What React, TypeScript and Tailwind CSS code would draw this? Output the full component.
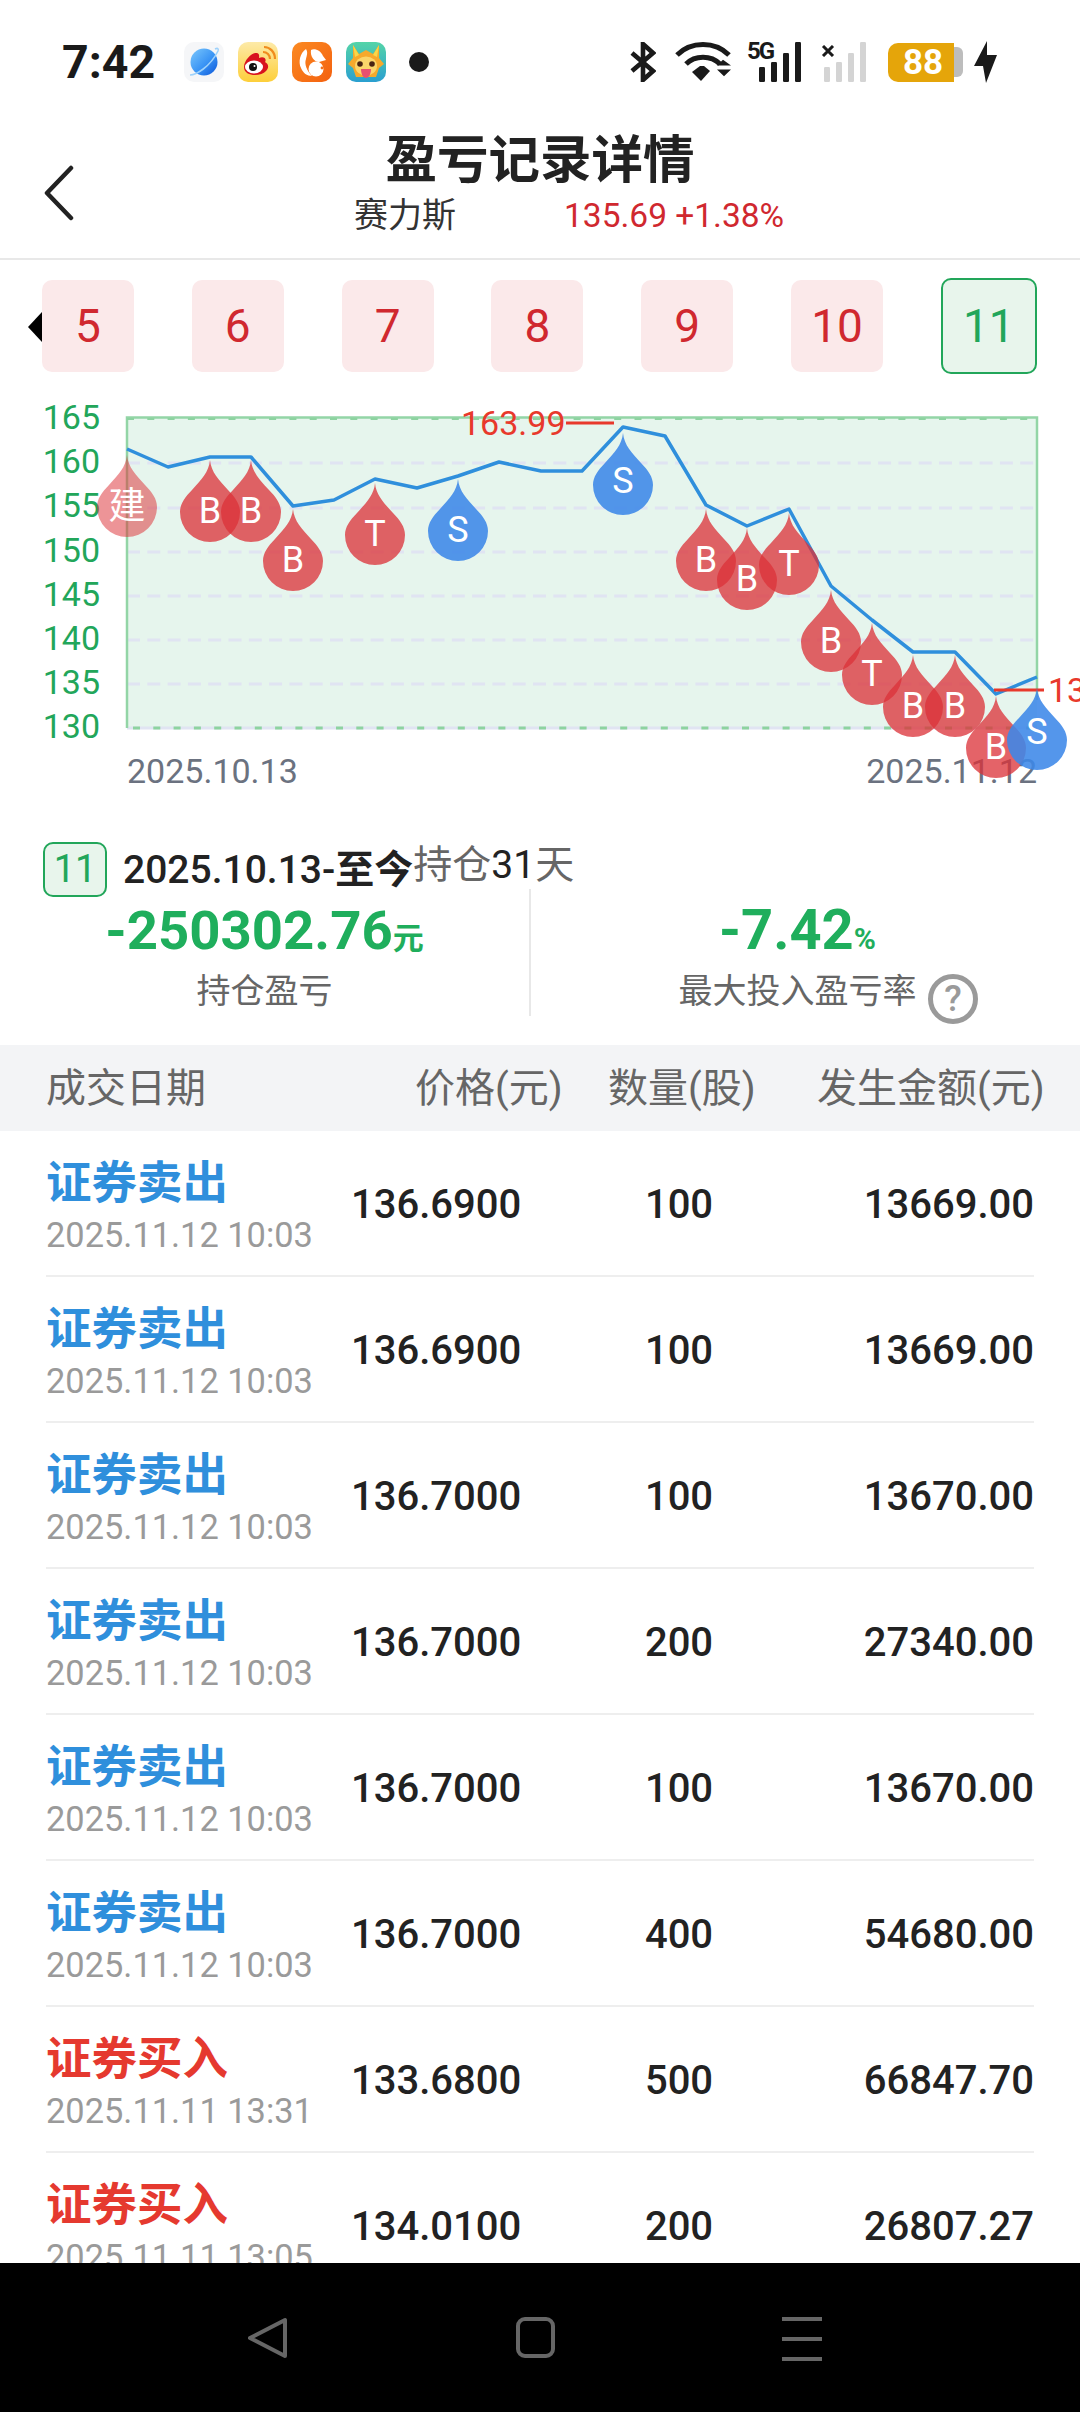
const linePoints = [
  [127, 449], [168, 467], [210, 457], [251, 457], [293, 506], [334, 500], [375, 479], [417, 488],
  [458, 476], [499, 462], [541, 471], [582, 471], [623, 427], [665, 436], [706, 505], [747, 526],
  [789, 509], [831, 586], [872, 620], [913, 652], [955, 652], [996, 694], [1037, 677],
];

const drops = [
  { x: 127, y: 455, label: "建", kind: "build", dy: 1 },
  { x: 210, y: 460, label: "B", kind: "buy", dy: 0 },
  { x: 251, y: 460, label: "B", kind: "buy", dy: 0 },
  { x: 293, y: 509, label: "B", kind: "buy", dy: 0 },
  { x: 375, y: 483, label: "T", kind: "buy", dy: 0 },
  { x: 458, y: 479, label: "S", kind: "sell", dy: 0 },
  { x: 623, y: 433, label: "S", kind: "sell", dy: -3 },
  { x: 706, y: 509, label: "B", kind: "buy", dy: 0 },
  { x: 747, y: 528, label: "B", kind: "buy", dy: 0 },
  { x: 789, y: 513, label: "T", kind: "buy", dy: 0 },
  { x: 831, y: 590, label: "B", kind: "buy", dy: 0 },
  { x: 872, y: 623, label: "T", kind: "buy", dy: 0 },
  { x: 913, y: 655, label: "B", kind: "buy", dy: 0 },
  { x: 955, y: 655, label: "B", kind: "buy", dy: 0 },
  { x: 996, y: 696, label: "B", kind: "buy", dy: 0 },
  { x: 1037, y: 688, label: "S", kind: "sell", dy: -7 },
];

const trades = [
  { type: "证券卖出", time: "2025.11.12 10:03", price: "136.6900", qty: "100", amount: "13669.00" },
  { type: "证券卖出", time: "2025.11.12 10:03", price: "136.6900", qty: "100", amount: "13669.00" },
  { type: "证券卖出", time: "2025.11.12 10:03", price: "136.7000", qty: "100", amount: "13670.00" },
  { type: "证券卖出", time: "2025.11.12 10:03", price: "136.7000", qty: "200", amount: "27340.00" },
  { type: "证券卖出", time: "2025.11.12 10:03", price: "136.7000", qty: "100", amount: "13670.00" },
  { type: "证券卖出", time: "2025.11.12 10:03", price: "136.7000", qty: "400", amount: "54680.00" },
  { type: "证券买入", time: "2025.11.11 13:31", price: "133.6800", qty: "500", amount: "66847.70" },
  { type: "证券买入", time: "2025.11.11 13:05", price: "134.0100", qty: "200", amount: "26807.27" },
];

const DROP_PATH =
  "M0 0C1 12 9 20 18 30C25 37 30 44 30 52A30 30 0 1 1 -30 52C-30 44 -25 37 -18 30C-9 20 -1 12 0 0Z";

function AppIcons() {
  return (
    <div className="ml-[29px] flex items-center gap-[14px]">
      <svg width="40" height="40" viewBox="0 0 40 40">
        <defs>
          <linearGradient id="planet" x1="0" y1="0" x2="1" y2="1">
            <stop offset="0" stopColor="#7cc8fc" />
            <stop offset="0.55" stopColor="#3a94f5" />
            <stop offset="1" stopColor="#0b55d8" />
          </linearGradient>
        </defs>
        <rect width="40" height="40" rx="10" fill="#f5f6f8" />
        <circle cx="20" cy="20" r="13.5" fill="url(#planet)" />
        <path d="M6 33C12 33 26 25 34 9C35 6 33 6 31 7" fill="none" stroke="#9ed2fb" strokeWidth="1.6" />
      </svg>
      <svg width="40" height="40" viewBox="0 0 40 40">
        <defs>
          <linearGradient id="weibo" x1="0" y1="0" x2="0" y2="1">
            <stop offset="0" stopColor="#fdeaa8" />
            <stop offset="1" stopColor="#fdcf3a" />
          </linearGradient>
        </defs>
        <rect width="40" height="40" rx="10" fill="url(#weibo)" />
        <path d="M6 25C6 18 14 10 19 11C22 12 21 15 21 16C26 14 29 17 27 20C31 22 31 26 28 29C23 35 6 35 6 25Z" fill="#d8131e" />
        <ellipse cx="16" cy="25" rx="9" ry="6.5" fill="#fff" />
        <circle cx="15" cy="25" r="4" fill="#111" />
        <circle cx="16.5" cy="24" r="1" fill="#fff" />
        <path d="M25 10C29 10 32 13 32 17M26 5C32 5 37 10 37 17" fill="none" stroke="#f08c1e" strokeWidth="2.2" />
      </svg>
      <svg width="40" height="40" viewBox="0 0 40 40">
        <defs>
          <linearGradient id="uc" x1="0" y1="0" x2="1" y2="1">
            <stop offset="0" stopColor="#fb8a22" />
            <stop offset="1" stopColor="#f4610f" />
          </linearGradient>
        </defs>
        <rect width="40" height="40" rx="10" fill="url(#uc)" />
        <path d="M14 7C8 11 6 20 9 26C11 31 15 34 20 34C15 29 12 22 14 17C15 13 16 10 14 7Z" fill="#fff" />
        <path d="M19 8C23 6 29 9 31 14L34 18L27 20C22 20 18 14 19 8Z" fill="#fff" />
        <circle cx="24" cy="27" r="7.5" fill="#fff" />
        <circle cx="30" cy="26" r="1.4" fill="#f4701a" />
      </svg>
      <svg width="40" height="40" viewBox="0 0 40 40">
        <defs>
          <linearGradient id="dragon" x1="0" y1="0" x2="0" y2="1">
            <stop offset="0" stopColor="#54d4a8" />
            <stop offset="1" stopColor="#2a9fd0" />
          </linearGradient>
        </defs>
        <rect width="40" height="40" rx="10" fill="url(#dragon)" />
        <path d="M7 3L13 12L20 8L27 12L33 3L33 16L38 22L33 26L30 35H10L7 26L2 22L7 16Z" fill="#f6a92c" />
        <path d="M7 3L13 13L9 15ZM33 3L27 13L31 15Z" fill="#f7d84a" />
        <ellipse cx="20" cy="24" rx="11" ry="9.5" fill="#fbd56a" />
        <circle cx="14" cy="22" r="2.8" fill="#4a2412" />
        <circle cx="26" cy="22" r="2.8" fill="#4a2412" />
        <path d="M15 27H25C25 33 22 36 20 36C17 36 15 32 15 27Z" fill="#e9506f" />
      </svg>
      <div className="ml-[9px] h-[20px] w-[20px] rounded-full bg-[#1a1a1a]" />
    </div>
  );
}

function SignalBars({ color }: { color: string }) {
  const bars = [
    [0, 25, 15],
    [12, 20, 20],
    [24, 11, 29],
    [36, 0, 40],
  ];
  return (
    <>
      {bars.map(([x, y, h]) => (
        <rect key={x} x={x} y={y} width="6" height={h} rx="1.2" fill={color} />
      ))}
    </>
  );
}

function StatusIcons() {
  return (
    <div className="mr-[82px] ml-auto flex h-[40px] items-center">
      <svg width="26" height="40" viewBox="0 0 26 40" fill="none" stroke="#1a1a1a" strokeWidth="4.6">
        <path d="M2 11L23 29L13 38V2L23 11L2 29" strokeLinejoin="miter" />
      </svg>
      <svg width="58" height="40" viewBox="0 0 58 40" fill="none" className="ml-[19px]">
        <path d="M2 13C16 -1 40 -1 54 13" stroke="#1a1a1a" strokeWidth="5" />
        <path d="M11 22C20 13 36 13 45 22" stroke="#1a1a1a" strokeWidth="5" />
        <path d="M17 31L25 25H29L35 30L26 40Z" fill="#1a1a1a" transform="translate(0 -1)" />
        <path d="M43 25L49 18L57 25ZM43 30H57L50 38Z" fill="#1a1a1a" transform="translate(-1 3) scale(1 .82)" />
      </svg>
      <div className="relative ml-[26px] h-[40px] w-[42px]">
        <span className="absolute -top-[3px] -left-[12px] text-[24px] leading-[24px] font-bold tracking-[-2px] text-[#1a1a1a]">
          5G
        </span>
        <svg width="42" height="40" viewBox="0 0 42 40" className="block">
          <SignalBars color="#1a1a1a" />
        </svg>
      </div>
      <div className="relative ml-[23px] h-[40px] w-[42px]">
        <svg width="42" height="40" viewBox="0 0 42 40" className="block">
          <SignalBars color="#d4d4d4" />
        </svg>
        <svg width="14" height="12" viewBox="0 0 14 12" className="absolute top-[3px] -left-[3px]">
          <path d="M2 1L12 11M12 1L2 11" stroke="#1a1a1a" strokeWidth="3" />
        </svg>
      </div>
      <div className="ml-[22px] flex items-center">
        <div className="flex h-[39px] w-[66px] items-center justify-center rounded-l-[10px] bg-[#e5a50a] pl-[4px] text-[35px] leading-none font-bold text-white">
          88
        </div>
        <div className="h-[30px] w-[9px] rounded-r-[6px] bg-[#bdbdbd]" />
      </div>
      <svg width="24" height="42" viewBox="0 0 24 42" className="ml-[11px]">
        <path d="M13 0L0 25H9L12 42L23 14H13Z" fill="#1a1a1a" />
      </svg>
    </div>
  );
}

function TradeChart() {
  const gridYs = [463, 508, 552, 596, 640, 684];
  return (
    <svg width="1080" height="434" viewBox="0 392 1080 434" className="block">
      <g fontFamily="Roboto, sans-serif" fontSize="34" fill="#22a65a" textAnchor="end">
        {[165, 160, 155, 150, 145, 140, 135, 130].map((v, i) => (
          <text key={v} x="100" y={429 + i * 44.2}>
            {v}
          </text>
        ))}
      </g>
      <rect x="127" y="418" width="910" height="310" fill="#e6f5ed" />
      {gridYs.map((y) => (
        <line key={y} x1="127" x2="1037" y1={y} y2={y} stroke="#e0e4f2" strokeWidth="3" strokeDasharray="13 7.3" />
      ))}
      <line x1="127" x2="1037" y1="728" y2="728" stroke="#e0e4f2" strokeWidth="3" />
      <line x1="127" x2="1037" y1="728" y2="728" stroke="#8dd3a0" strokeWidth="3" strokeDasharray="7 13.3" strokeDashoffset="-6" />
      <path d="M127 728V417.5H1037V700" fill="none" stroke="#93d5a6" strokeWidth="2.5" />
      <line x1="127" x2="1037" y1="419" y2="419" stroke="#8dd3a0" strokeWidth="2" strokeDasharray="7 13.3" />
      <polyline
        points={linePoints.map((p) => p.join(",")).join(" ")}
        fill="none"
        stroke="#2f8fdc"
        strokeWidth="3.5"
        strokeLinejoin="round"
      />
      <text x="461" y="435" fontFamily="Roboto, sans-serif" fontSize="34" fill="#e8392c">
        163.99
      </text>
      <line x1="566" x2="614" y1="423" y2="423" stroke="#e8392c" strokeWidth="3" />
      <line x1="994" x2="1044" y1="690" y2="690" stroke="#e8392c" strokeWidth="3" />
      <text x="1048" y="702" fontFamily="Roboto, sans-serif" fontSize="34" fill="#e8392c">
        135.69
      </text>
      <g fontFamily="Roboto, sans-serif" fontSize="34" fill="#6b7280">
        <text x="127" y="783">
          2025.10.13
        </text>
        <text x="1037" y="783" textAnchor="end">
          2025.11.12
        </text>
      </g>
      {drops.map((d, i) => (
        <g key={i} transform={`translate(${d.x} ${d.y})`}>
          <path
            d={DROP_PATH}
            fill={d.kind === "sell" ? "#3c87e8" : "#dc3238"}
            fillOpacity={d.kind === "sell" ? 0.88 : d.kind === "build" ? 0.52 : 0.76}
          />
          <text
            x="0"
            y={63 + d.dy}
            textAnchor="middle"
            fontSize={d.label === "建" ? 37 : 36}
            fill="#fff"
            fontFamily="Roboto, 'Noto Sans CJK SC', sans-serif"
          >
            {d.label}
          </text>
        </g>
      ))}
    </svg>
  );
}

function TradeRow({ type, time, price, qty, amount }: (typeof trades)[number]) {
  const isSell = type === "证券卖出";
  return (
    <div className="mx-[46px] flex h-[146px] shrink-0 items-center border-b-2 border-[#eeeeee] pt-[3px]">
      <div className="w-[305px] pt-[4px]">
        <div className={`text-[45.5px] leading-[50px] font-bold ${isSell ? "text-[#2f8fdc]" : "text-[#e5392f]"}`}>
          {type}
        </div>
        <div className="mt-[6px] text-[34.4px] leading-[40px] text-[#9a9a9a]">{time}</div>
      </div>
      <div className="w-[222px] text-[40px] font-medium text-[#222222]">{price}</div>
      <div className="w-[212px] text-center text-[40px] font-medium text-[#222222]">{qty}</div>
      <div className="flex-1 text-right text-[40px] font-medium text-[#222222]">{amount}</div>
    </div>
  );
}

export default function App() {
  return (
    <div className="flex h-[2412px] w-[1080px] flex-col overflow-hidden bg-white [font-family:Roboto,'Noto_Sans_CJK_SC',sans-serif]">
      {/* status bar */}
      <div className="flex h-[125px] shrink-0 items-start pt-[42px] pl-[62px]">
        <span className="text-[46.5px] leading-[40px] font-bold text-[#1a1a1a]">7:42</span>
        <AppIcons />
        <StatusIcons />
      </div>

      {/* header */}
      <div className="relative h-[135px] shrink-0 border-b-2 border-[#e8e8e8]">
        <svg
          width="32"
          height="56"
          viewBox="0 0 32 56"
          fill="none"
          stroke="#222222"
          strokeWidth="4.5"
          strokeLinecap="round"
          strokeLinejoin="round"
          className="absolute top-[40px] left-[43px]"
        >
          <path d="M28 3L4 28L28 53" />
        </svg>
        <div className="pt-px text-center text-[51.5px] leading-[70px] font-bold text-[#222222]">盈亏记录详情</div>
        <div className="flex items-center pl-[354px] leading-[39px]">
          <span className="w-[210px] text-[34px] text-[#333333]">赛力斯</span>
          <span className="text-[33.5px] text-[#d0282f]">135.69 +1.38%</span>
        </div>
      </div>

      {/* month tabs */}
      <div className="relative flex h-[132px] shrink-0 items-center gap-[57.8px] pl-[42px]">
        <div className="absolute top-[52px] left-[28px] h-0 w-0 border-y-[15px] border-r-[14px] border-y-transparent border-r-black" />
        {["5", "6", "7", "8", "9", "10"].map((m) => (
          <div
            key={m}
            className="relative flex h-[92px] w-[92px] items-center justify-center rounded-[10px] bg-[#fbe9ea] text-[46px] text-[#d0282f]"
          >
            {m}
          </div>
        ))}
        <div className="flex h-[96px] w-[96px] items-center justify-center rounded-[10px] border-2 border-[#22a65a] bg-[#e8f5ec] text-[46px] text-[#22a65a]">
          11
        </div>
      </div>

      <TradeChart />

      {/* position summary */}
      <div className="h-[219px] shrink-0 pt-[16px]">
        <div className="flex h-[47px] items-start pl-[43px]">
          <div className="flex h-[55px] w-[64px] items-center justify-center rounded-[10px] border-2 border-[#22a65a] bg-[#e8f5ec] text-[38px] text-[#22a65a]">
            11
          </div>
          <div className="ml-[16px] text-[39px] leading-[56px] whitespace-nowrap text-[#222222]">
            <span className="font-medium">2025.10.13-</span>
            <span className="font-bold">至今</span>
            <span className="inline-block -translate-y-[5px] text-[#666666]">持仓</span>
            <span className="inline-block -translate-y-[5px]">31</span>
            <span className="inline-block -translate-y-[5px] text-[#666666]">天</span>
          </div>
        </div>
        <div className="flex h-[127px]">
          <div className="w-[531px] border-r-2 border-[#e8e8e8] pt-[11px] text-center">
            <div className="leading-[60px] font-bold text-[#1fae5c]">
              <span className="text-[54.5px]">-250302.76</span>
              <span className="text-[31px]">元</span>
            </div>
            <div className="-mt-[3px] text-[34px] leading-[40px] text-[#666666]">持仓盈亏</div>
          </div>
          <div className="w-[533px] pt-[11px] text-center">
            <div className="leading-[60px] font-bold text-[#1fae5c]">
              <span className="text-[56px]">-7.42</span>
              <span className="text-[30px]">%</span>
            </div>
            <div className="relative -mt-[3px] text-[34px] leading-[40px] text-[#666666]">
              最大投入盈亏率
              <div className="absolute top-[3px] left-[397px] flex h-[50px] w-[50px] items-center justify-center rounded-full border-[5px] border-[#9a9a9a] text-[36px] font-medium text-[#9a9a9a]">
                ?
              </div>
            </div>
          </div>
        </div>
      </div>

      {/* table header */}
      <div className="flex h-[86px] shrink-0 items-center bg-[#f3f4f6] pt-[2px] text-[40px] text-[#666666]">
        <span className="w-[415px] pl-[46px]">成交日期</span>
        <span className="w-[193px]">价格(元)</span>
        <span className="w-[209px]">数量(股)</span>
        <span className="whitespace-nowrap">发生金额(元)</span>
      </div>

      {/* trades */}
      <div className="flex min-h-0 flex-1 flex-col overflow-hidden">
        {trades.map((t, i) => (
          <TradeRow key={i} {...t} />
        ))}
      </div>

      {/* nav bar */}
      <div className="flex h-[149px] shrink-0 items-start bg-black pt-[54px] pl-[248px]">
        <svg width="40" height="42" viewBox="0 0 40 42" fill="none">
          <path d="M37 3V39L2 21Z" stroke="#666666" strokeWidth="4" strokeLinejoin="round" />
        </svg>
        <div className="ml-[228px] h-[41px] w-[39px] rounded-[9px] border-[4px] border-[#666666]" />
        <div className="ml-[227px] flex h-[44px] w-[40px] flex-col justify-between">
          <div className="h-[4px] bg-[#666666]" />
          <div className="h-[4px] bg-[#666666]" />
          <div className="h-[4px] bg-[#666666]" />
        </div>
      </div>
    </div>
  );
}
